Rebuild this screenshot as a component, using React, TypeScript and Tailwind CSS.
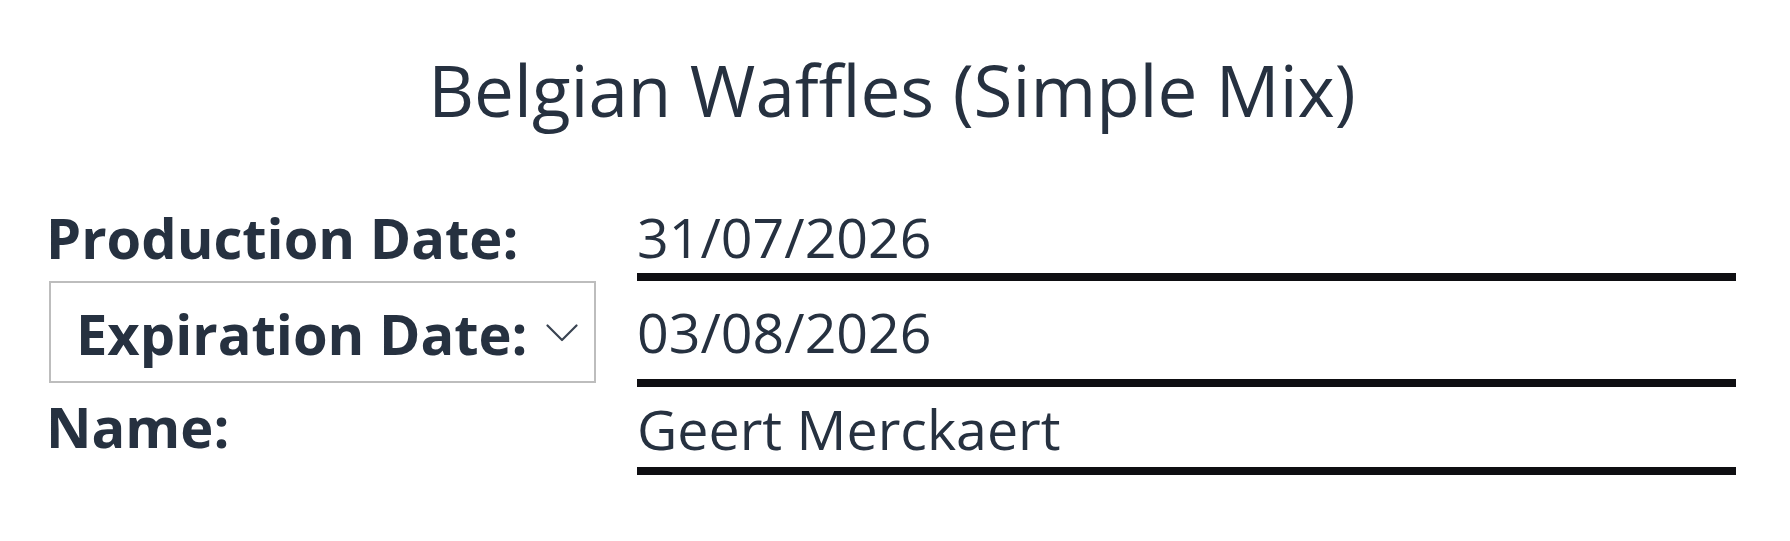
import React from "react";

const ink = "text-[#263140]";

function ChevronIcon() {
  return (
    <svg width="32" height="18" viewBox="0 0 32 18" fill="none" className="shrink-0">
      <polyline points="1.5,1.5 16,16 30.5,1.5" stroke="#3a4452" strokeWidth="2.2" strokeLinecap="round" strokeLinejoin="round" />
    </svg>
  );
}

export default function App() {
  return (
    <div
      className={`w-[1790px] h-[541px] bg-white ${ink} overflow-hidden`}
      style={{ fontFamily: '"Open Sans", "Noto Sans", sans-serif' }}
    >
      {/* Title */}
      <h1 className="pt-[54px] text-center text-[71px] leading-none font-normal pr-[6px]">
        Belgian Waffles (Simple Mix)
      </h1>

      {/* Form rows */}
      <div className="mt-[84px] ml-[49px] mr-[54px] grid grid-cols-[547px_1fr] gap-x-[41px]">
        {/* Production date */}
        <div className="-ml-[3px] text-[56px] font-bold leading-none">Production Date:</div>
        <div className="text-[55.5px] leading-none pb-[8px] border-b-[8px] border-[#0e0e12]">31/07/2026</div>

        {/* Expiration date select */}
        <div className="self-start h-[102px] border-2 border-[#bdbdbd] flex items-start justify-between pl-[25px] pr-[16px] pt-[22px]">
          <span className="text-[56px] font-bold leading-none">Expiration Date:</span>
          <span className="mt-[19px]">
            <ChevronIcon />
          </span>
        </div>
        <div className="text-[55.5px] leading-none pt-[23px] pb-[20px] border-b-[8px] border-[#0e0e12]">03/08/2026</div>

        {/* Name */}
        <div className="-ml-[3px] text-[56px] font-bold leading-none pt-[11px]">Name:</div>
        <div className="text-[55.5px] leading-none pt-[14px] pb-[10px] border-b-[8px] border-[#0e0e12]">Geert Merckaert</div>
      </div>
    </div>
  );
}
